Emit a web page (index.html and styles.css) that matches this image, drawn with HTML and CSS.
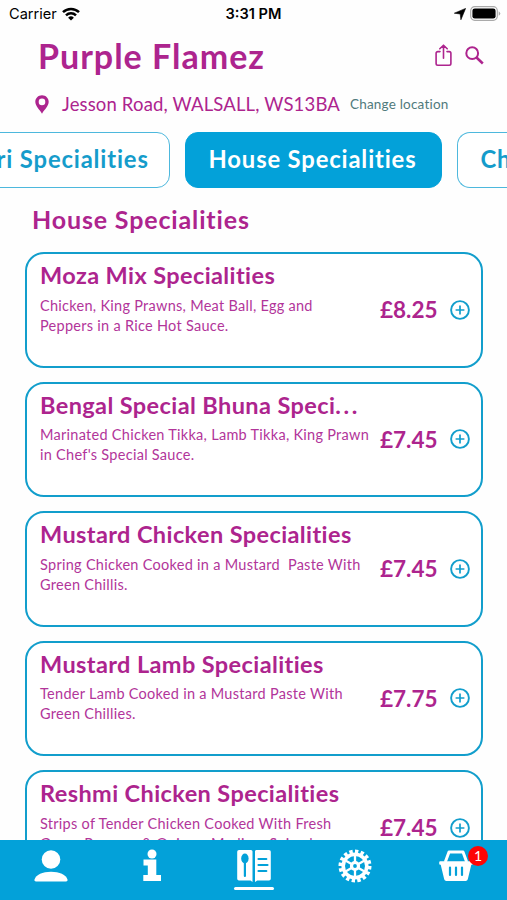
FILE: index.html
```html
<!DOCTYPE html>
<html lang="en">
<head>
    <meta charset="UTF-8">
    <meta name="viewport" content="width=device-width, initial-scale=1.0">
    <title>Purple Flamez</title>
    <link rel="stylesheet" href="styles.css">
</head>
<body>
    <!-- plus button icon, used on every dish -->
    <svg width="0" height="0" class="defs">
        <symbol id="plus" viewBox="0 0 20 20">
            <circle cx="10" cy="10" r="8.9" fill="none" stroke="currentColor" stroke-width="1.9"/>
            <path d="M10 5.6v8.8M5.6 10h8.8" stroke="currentColor" stroke-width="1.7"/>
        </symbol>
    </svg>

    <div class="status">
        <div class="carrier">
            <span>Carrier</span>
            <svg width="18" height="14" viewBox="0 0 18 14" fill="none" stroke="#000" stroke-width="2.5">
                <path d="M1 5.2a11.4 11.4 0 0 1 16 0M4 8.3a7.2 7.2 0 0 1 10 0"/>
                <path d="M9 13.6L6.1 10.7a4.2 4.2 0 0 1 5.8 0z" fill="#000" stroke="none"/>
            </svg>
        </div>
        <div class="time">3:31 PM</div>
        <div class="battery">
            <svg width="12" height="12" viewBox="0 0 12 12"><path d="M11.6.4L.3 5.2l5.9.8.7 5.8z" stroke="#000" stroke-width=".6"/></svg>
            <svg width="31" height="15" viewBox="0 0 31 15">
                <rect x=".7" y=".7" width="26.6" height="13.6" rx="4" fill="#fff" stroke="#aaa" stroke-width="1.2"/>
                <rect x="2.4" y="2.4" width="23.2" height="10.2" rx="2.4"/>
                <path d="M28.7 5.2q3.2 2.3 0 4.6z" fill="#aaa"/>
            </svg>
        </div>
    </div>

    <div class="header">
        <h1>Purple Flamez</h1>
        <div class="actions">
            <svg width="17" height="23" viewBox="0 0 17 23" fill="none" stroke="currentColor" stroke-width="1.6" stroke-linecap="round" stroke-linejoin="round">
                <path d="M5 7.6H2.8a1.7 1.7 0 0 0-1.7 1.7v10.3a1.7 1.7 0 0 0 1.7 1.7h11.400a1.7 1.7 0 0 0 1.7-1.7V9.3a1.7 1.7 0 0 0-1.7-1.7H12M8.5 14.2V1.5M4.8 4.8l3.7-3.6 3.7 3.6"/>
            </svg>
            <svg width="19" height="19" viewBox="0 0 19 19" fill="none" stroke="currentColor" stroke-width="2">
                <circle cx="7.2" cy="7.2" r="5.9"/>
                <path d="M11.5 11.5l6.3 6" stroke-width="2.5"/>
            </svg>
        </div>
    </div>

    <div class="location">
        <svg width="14" height="19" viewBox="0 0 14 19"><path fill="currentColor" fill-rule="evenodd" d="M7 .2C3.2.2.3 3.1.3 6.8.3 11 4.5 14.5 7 18.7c2.5-4.2 6.7-7.7 6.7-11.9C13.7 3.1 10.8.2 7 .2zM7 3.6a3.3 3.3 0 1 1 0 6.6 3.3 3.3 0 0 1 0-6.6z"/></svg>
        <span class="address">Jesson Road, WALSALL, WS13BA</span>
        <span class="change">Change location</span>
    </div>

    <div class="tabs">
        <div class="tab">Tandoori Specialities</div>
        <div class="tab active">House Specialities</div>
        <div class="tab last">Chicken</div>
    </div>

    <h2>House Specialities</h2>

    <div class="list">
        <div class="card">
            <div class="info">
                <h3>Moza Mix Specialities</h3>
                <p>Chicken, King Prawns, Meat Ball, Egg and<br>Peppers in a Rice Hot Sauce.</p>
            </div>
            <div class="price">£8.25</div>
            <svg class="add"><use href="#plus"/></svg>
        </div>
        <div class="card">
            <div class="info">
                <h3>Bengal Special Bhuna Speci<span class="dots">...</span></h3>
                <p>Marinated Chicken Tikka, Lamb Tikka, King Prawn<br>in Chef's Special Sauce.</p>
            </div>
            <div class="price">£7.45</div>
            <svg class="add"><use href="#plus"/></svg>
        </div>
        <div class="card">
            <div class="info">
                <h3>Mustard Chicken Specialities</h3>
                <p>Spring Chicken Cooked in a Mustard&nbsp; Paste With<br>Green Chillis.</p>
            </div>
            <div class="price">£7.45</div>
            <svg class="add"><use href="#plus"/></svg>
        </div>
        <div class="card">
            <div class="info">
                <h3>Mustard Lamb Specialities</h3>
                <p>Tender Lamb Cooked in a Mustard Paste With<br>Green Chillies.</p>
            </div>
            <div class="price">£7.75</div>
            <svg class="add"><use href="#plus"/></svg>
        </div>
        <div class="card">
            <div class="info">
                <h3>Reshmi Chicken Specialities</h3>
                <p>Strips of Tender Chicken Cooked With Fresh<br>Green Peppers &amp; Onions, Medium Spiced.</p>
            </div>
            <div class="price">£7.45</div>
            <svg class="add"><use href="#plus"/></svg>
        </div>
    </div>

    <div class="navbar">
        <div class="nav-item">
            <svg width="34" height="34" viewBox="0 0 34 34" fill="#fff">
                <circle cx="17" cy="10.5" r="9.3"/>
                <path d="M.5 30.5C2 25.5 8.5 22.7 17 22.7s15 2.8 16.5 7.8c.3 1.2-.4 2-1.5 2H2c-1.1 0-1.8-.8-1.5-2z"/>
            </svg>
        </div>
        <div class="nav-item">
            <svg width="18" height="34" viewBox="0 0 18 34" fill="#fff">
                <circle cx="9" cy="5" r="4.5"/>
                <path d="M.5 10.5h12.8v15.5H18v6H.3v-6h4.5v-9.5H.5z"/>
            </svg>
        </div>
        <div class="nav-item selected">
            <svg width="34" height="34" viewBox="0 0 34 34">
                <path fill="#fff" d="M2 1h12a1.5 1.5 0 0 1 1.5 1.5V33l-2-1.5H2A1.8 1.8 0 0 1 .2 29.7V2.8A1.8 1.8 0 0 1 2 1zM20 1h12a1.8 1.8 0 0 1 1.8 1.8V29.7a1.8 1.8 0 0 1-1.8 1.8H20.3L18 33V2.5A1.5 1.5 0 0 1 20 1z"/>
                <ellipse cx="7.9" cy="9.5" rx="3.7" ry="5" fill="#03a1d9"/>
                <path d="M7.9 12v15M21.5 10h7.8M21.5 16h9M21.5 22h7.8" stroke="#03a1d9" stroke-width="2.2" stroke-linecap="round"/>
            </svg>
        </div>
        <div class="nav-item">
            <svg width="34" height="34" viewBox="-17 -17 34 34" fill="none" stroke="#fff">
                <circle r="14.7" stroke-width="3.6" stroke-dasharray="3.4 2.372" pathLength="92.352"/>
                <circle r="11.8" stroke-width="3.6"/>
                <circle r="3.5" stroke-width="3.2"/>
                <path stroke-width="2.3" d="M0-4v-8M0 4v8M3.5-2l6.9-4M3.5 2l6.9 4M-3.5-2l-6.9-4M-3.5 2l-6.9 4"/>
            </svg>
        </div>
        <div class="nav-item">
            <svg width="34" height="34" viewBox="0 0 34 34">
                <path d="M6.3 13L10 3h14l3.7 10" fill="none" stroke="#fff" stroke-width="3" stroke-linejoin="round"/>
                <path fill="#fff" d="M1.2 12.2h31.6a1 1 0 0 1 1 1v1.5a1 1 0 0 1-1 1h-.5l-3.5 14.5a2.3 2.3 0 0 1-2.2 1.800H7.400a2.300 2.300 0 0 1-2.200-1.800L1.700 15.700h-.5a1 1 0 0 1-1-1v-1.500a1 1 0 0 1 1-1z"/>
                <path d="M11 18.5v7.500M17 18.500v7.500M23 18.500v7.500" stroke="#03a1d9" stroke-width="2.200" stroke-linecap="round"/>
            </svg>
            <span class="badge">1</span>
        </div>
    </div>
</body>
</html>
```
FILE: styles.css
```css
*{
    margin: 0;
    padding: 0;
    box-sizing: border-box;
}
body{
    width: 507px;
    height: 900px;
    overflow: hidden;
    display: flex;
    flex-direction: column;
    background-color: #fefefe;
    color: #ad248e;
    font-family: Lato, sans-serif;
}
svg{
    display: block;
    flex-shrink: 0;
}
.defs{
    position: absolute;
}

/* phone status bar */
.status{
    display: grid;
    grid-template-columns: 1fr auto 1fr;
    height: 27px;
    flex-shrink: 0;
    align-items: center;
    padding: 0 6px 0 9px;
    color: #000;
    font-family: Inter, sans-serif;
    font-size: 14.6px;
}
.carrier{
    display: flex;
    align-items: center;
    gap: 5px;
}
.time{
    padding-right: 3px;
    font-weight: 600;
}
.battery{
    display: flex;
    align-items: center;
    justify-content: flex-end;
    gap: 4px;
}

.header{
    display: flex;
    justify-content: space-between;
    align-items: center;
    height: 56px;
    flex-shrink: 0;
    padding: 0 23px 0 38px;
}
h1{
    font-size: 34px;
    font-weight: 700;
    letter-spacing: 1px;
}
.actions{
    display: flex;
    align-items: center;
    gap: 13px;
}

.location{
    display: flex;
    align-items: center;
    height: 42px;
    flex-shrink: 0;
    padding-left: 35px;
    white-space: nowrap;
}
.address{
    margin-left: 13px;
    width: 288px;
    font-size: 18.5px;
    letter-spacing: 0.15px;
}
.change{
    color: #507a7c;
    font-size: 13.5px;
    letter-spacing: 0.2px;
}

/* category tabs, scrolled sideways */
.tabs{
    display: flex;
    justify-content: flex-end;
    gap: 15px;
    margin-top: 7px;
    flex-shrink: 0;
    height: 56px;
    overflow: hidden;
}
.tab{
    width: 257px;
    flex-shrink: 0;
    padding-right: 24px;
    border: 1.5px solid #4db8dd;
    border-radius: 13px;
    background-color: #fff;
    color: #159ccb;
    font-size: 23.8px;
    font-weight: 700;
    letter-spacing: 0.85px;
    line-height: 52px;
    text-align: right;
    white-space: nowrap;
}
.tab.active{
    background-color: #03a1d9;
    border-color: #03a1d9;
    color: #fff;
}
/* only the start of this one is on screen */
.tab.last{
    width: 50.5px;
    padding: 0 0 0 23px;
    overflow: hidden;
    border-right: none;
    border-radius: 13px 0 0 13px;
    text-align: left;
}

h2{
    height: 64px;
    flex-shrink: 0;
    padding-left: 32px;
    font-size: 25px;
    font-weight: 700;
    letter-spacing: 0.85px;
    line-height: 63px;
}

/* dishes */
.list{
    display: flex;
    flex-direction: column;
    gap: 14px;
    flex: 1;
    min-height: 0;
    overflow: hidden;
    padding: 0 24px 0 25px;
}
.card{
    display: flex;
    height: 115.5px;
    flex-shrink: 0;
    align-items: center;
    padding: 0 10px 0 13px;
    border: 2px solid #129ecc;
    border-radius: 19px;
    background-color: #fff;
}
.info{
    width: 340px;
    align-self: flex-start;
    padding-top: 6px;
    white-space: nowrap;
}
h3{
    font-size: 23.5px;
    font-weight: 700;
    letter-spacing: 0.4px;
    line-height: 31px;
}
.dots{
    letter-spacing: 2.6px;
}
.info p{
    margin-top: 4.5px;
    color: #b2359a;
    font-size: 14.5px;
    letter-spacing: 0.28px;
    line-height: 20px;
}
.price{
    width: 70px;
    font-size: 22.5px;
    font-weight: 700;
}
.add{
    width: 20px;
    height: 20px;
    color: #129ecc;
}

/* bottom bar */
.navbar{
    display: flex;
    height: 60px;
    flex-shrink: 0;
    background-color: #03a1d9;
}
.nav-item{
    position: relative;
    display: flex;
    flex-direction: column;
    align-items: center;
    flex: 1;
    padding-top: 9px;
}
.nav-item.selected::after{
    content: "";
    width: 40px;
    height: 3px;
    margin-top: 4px;
    border-radius: 2px;
    background-color: #fff;
}
.badge{
    position: absolute;
    top: 6px;
    right: 19px;
    width: 20px;
    height: 20px;
    border-radius: 50%;
    background-color: #fe0505;
    color: #fff;
    font-size: 14px;
    line-height: 20px;
    text-align: center;
}
```
